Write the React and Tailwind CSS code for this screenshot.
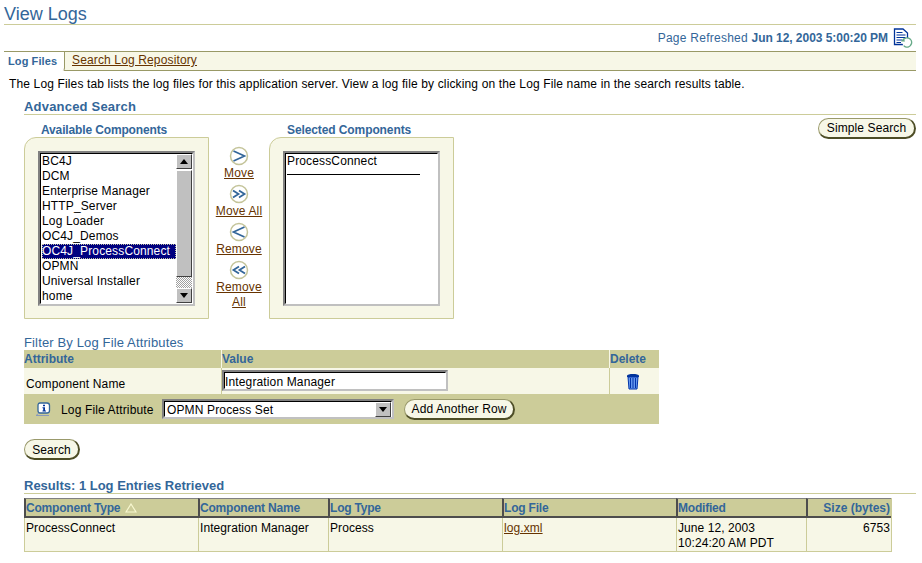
const list = ["BC4J", "DCM", "Enterprise Manager", "HTTP_Server", "Log Loader", "OC4J_Demos", "OC4J_ProcessConnect", "OPMN", "Universal Installer", "home"];

function Circle({ kind }) {
  return (
    <svg width="20" height="20" viewBox="0 0 20 20" className="block shrink-0">
      <circle cx="10" cy="10" r="8.5" fill="#ffffff" stroke="#c4c49a" strokeWidth="1.5" />
      {kind === "right" && <path d="M4.5 5 L15.5 10 L4.5 15" fill="none" stroke="#336699" strokeWidth="1.7" />}
      {kind === "left" && <path d="M15.5 5 L4.5 10 L15.5 15" fill="none" stroke="#336699" strokeWidth="1.7" />}
      {kind === "rightAll" && <path d="M4 6.5 L9.5 10 L4 13.5 M10 6.5 L15.5 10 L10 13.5" fill="none" stroke="#336699" strokeWidth="1.8" />}
      {kind === "leftAll" && <path d="M10 6.5 L4.5 10 L10 13.5 M16 6.5 L10.5 10 L16 13.5" fill="none" stroke="#336699" strokeWidth="1.8" />}
    </svg>
  );
}

function Shuttle({ kind, children }) {
  return (
    <div className="flex flex-col items-center h-[38px]">
      <Circle kind={kind} />
      <a className="underline text-[#663300] text-[12px] leading-[15px] text-center">{children}</a>
    </div>
  );
}

function OraButton({ children, className }) {
  return (
    <button className={"h-[21px] rounded-full border border-[#99996b] border-r-2 border-b-2 border-r-[#4d4d26] border-b-[#4d4d26] bg-[#f7f7e7] text-[12px] leading-none text-black tracking-[0.1px] " + className}>
      {children}
    </button>
  );
}

function Arrow({ up }) {
  return (
    <div className="h-[15px] w-[16px] shrink-0 bg-[#c0c0c0] border border-t-white border-l-white border-r-[#404040] border-b-[#404040] flex items-center justify-center">
      <svg width="8" height="5" viewBox="0 0 8 5">
        <path d={up ? "M0 5 L4 0 L8 5 Z" : "M0 0 L4 5 L8 0 Z"} fill="#000000" />
      </svg>
    </div>
  );
}

function Sunken({ className, children }) {
  return (
    <div className={"border-2 border-t-[#808080] border-l-[#808080] border-r-[#c0c0c0] border-b-[#c0c0c0] " + className}>
      <div className="h-full w-full border border-t-black border-l-black border-r-white border-b-white bg-white">
        {children}
      </div>
    </div>
  );
}

function HeaderCell({ className, children }) {
  return (
    <div className={"h-[20px] bg-[#cccc99] border-t border-t-[#808080] border-l-2 border-l-[#4d4d4d] border-b-2 border-b-[#4d4d4d] pt-[1px] text-[12px] leading-[16px] font-bold tracking-[-0.2px] text-[#336699] flex items-center gap-[5px] " + className}>
      {children}
    </div>
  );
}

function BodyCell({ className, children }) {
  return (
    <div className={"bg-[#f7f7e7] border-l border-l-[#cccc99] pl-[1px] pt-[3px] text-[12px] leading-[15px] tracking-[0.08px] text-black " + className}>
      {children}
    </div>
  );
}

export default function App() {
  return (
    <div className="w-[922px] h-[563px] overflow-hidden bg-white pl-[4px] pr-[6px] font-['Liberation_Sans',Arial,sans-serif] text-[12px] tracking-[0.14px] text-black">
      <h1 className="h-[25px] border-b border-[#cccc99] text-[18px] leading-[29px] tracking-normal text-[#336699] font-normal">View Logs</h1>

      <div className="h-[26px] flex items-center justify-end gap-[5px] pr-[3px] text-[12px] text-[#336699]">
        <span className="tracking-[0.25px]">Page Refreshed <b className="tracking-[-0.04px]">Jun 12, 2003 5:00:20 PM</b></span>
        <svg width="20" height="20" viewBox="0 0 20 20" className="block">
          <path d="M1.5 1 H10 L14.5 5 V16.5 H1.5 Z" fill="#ffffff" stroke="#003399" strokeWidth="1.3" />
          <path d="M3.5 4.5 H9.5 M3.5 7 H12.5 M3.5 9.5 H12.5 M3.5 12 H9 M3.5 14.5 H8" stroke="#003399" strokeWidth="1" />
          <circle cx="14" cy="14.5" r="4.6" fill="#ffffff" stroke="#66aa88" strokeWidth="1.4" strokeDasharray="23 6" transform="rotate(200 14 14.5)" />
          <path d="M8 13.5 L12 13.5 L10.5 10 Z" fill="#66aa88" />
        </svg>
      </div>

      <div className="h-[20px] flex border-t border-b border-[#999966] bg-[#f7f7e7]">
        <div className="w-[61px] -mb-px bg-white border-r border-b border-r-[#999966] border-b-white rounded-br-[3px] pl-[4px] pt-[1px] text-[11px] leading-[17px] tracking-[0.1px] font-bold text-[#336699]">Log Files</div>
        <a className="pl-[7px] text-[12px] leading-[16px] text-[#663300] underline">Search Log Repository</a>
      </div>

      <p className="pl-[5px] mt-[6px] leading-[15px] text-[12px]">The Log Files tab lists the log files for this application server. View a log file by clicking on the Log File name in the search results table.</p>

      <div className="ml-[20px]">
        <h2 className="mt-[6px] h-[17px] border-b border-[#cccc99] text-[13px] leading-[18px] tracking-[0.2px] font-bold text-[#336699]">Advanced Search</h2>

        <div className="flex items-start justify-between">
          <div className="flex">
            <div className="w-[185px]">
              <div className="pl-[17px] h-[22px] pt-[8px] text-[12px] leading-[14px] tracking-[-0.14px] font-bold text-[#336699]">Available Components</div>
              <div className="h-[182px] bg-[#f7f7e7] border border-[#cccc99] rounded-tl-[12px] pl-[13px] pt-[13px]">
                <Sunken className="w-[157px] h-[155px]">
                  <div className="flex h-full">
                    <ul className="w-[137px] pl-[1px]">
                      {list.map((name) => (
                        <li key={name} className={name === "OC4J_ProcessConnect" ? "h-[15px] leading-[15px] bg-[#000080] text-white outline-1 -outline-offset-1 outline-dotted outline-[#c0c0a0]" : "h-[15px] leading-[15px]"}>{name}</li>
                      ))}
                    </ul>
                    <div className="w-[16px] flex flex-col">
                      <Arrow up />
                      <div className="h-[108px] mt-[1px] bg-[#c0c0c0] border border-t-white border-l-white border-r-[#404040] border-b-[#404040]" />
                      <div className="h-[11px] bg-[conic-gradient(#a0a0a0_25%,#ffffff_0_50%,#a0a0a0_0_75%,#ffffff_0)] bg-[length:2px_2px]" />
                      <Arrow />
                    </div>
                  </div>
                </Sunken>
              </div>
            </div>

            <div className="w-[60px] pt-[31px] flex flex-col items-center">
              <Shuttle kind="right">Move</Shuttle>
              <Shuttle kind="rightAll">Move All</Shuttle>
              <Shuttle kind="left">Remove</Shuttle>
              <Shuttle kind="leftAll">Remove<br />All</Shuttle>
            </div>

            <div className="w-[185px]">
              <div className="pl-[18px] h-[22px] pt-[8px] text-[12px] leading-[14px] tracking-[-0.1px] font-bold text-[#336699]">Selected Components</div>
              <div className="h-[182px] bg-[#f7f7e7] border border-[#cccc99] rounded-tl-[12px] pl-[13px] pt-[13px]">
                <Sunken className="w-[157px] h-[155px]">
                  <div className="pl-[1px] leading-[15px]">ProcessConnect</div>
                  <div className="ml-[1px] mt-[5px] w-[133px] border-t border-black" />
                </Sunken>
              </div>
            </div>
          </div>
          <OraButton className="w-[98px] mt-[3px]">Simple Search</OraButton>
        </div>

        <div className="mt-[15px] h-[16px] text-[13px] leading-[18px] text-[#336699]">Filter By Log File Attributes</div>

        <div className="w-[635px]">
          <div className="flex h-[18px] bg-[#cccc99] text-[12px] leading-[18px] tracking-normal font-bold text-[#336699]">
            <div className="w-[197px]">Attribute</div>
            <div className="w-[388px] border-l border-[#f7f7e7]">Value</div>
            <div className="flex-1 border-l border-[#f7f7e7]">Delete</div>
          </div>
          <div className="flex h-[26px] bg-[#f7f7e7]">
            <div className="w-[197px] pl-[2px] pt-[9px] leading-[15px]">Component Name</div>
            <div className="w-[388px] border-l border-[#cccc99] pt-[2px]">
              <Sunken className="w-[226px] h-[21px]">
                <div className="leading-[19px]">Integration Manager</div>
              </Sunken>
            </div>
            <div className="flex-1 border-l border-[#cccc99] flex items-center justify-center pr-[3px]">
              <svg width="14" height="17" viewBox="0 0 14 17">
                <path d="M1 3 C1 1.5 4 1 7 1 C10 1 13 1.5 13 3 V4 H1 Z" fill="#003399" />
                <path d="M2 4 H12 L11 16 H3 Z" fill="#6699ee" stroke="#0033aa" />
                <path d="M4.5 5 V15 M7 5 V15 M9.5 5 V15" stroke="#0033aa" strokeWidth="1" />
              </svg>
            </div>
          </div>
          <div className="flex items-center h-[30px] bg-[#cccc99]">
            <svg width="16" height="15" viewBox="0 0 16 15" className="ml-[11px] block">
              <path d="M5 1 H12 Q14.5 1 14.5 3.5 V8.5 Q14.5 11 12 11 H5 Q3 11 3 8.5 V3.5 Q3 1 5 1 Z" fill="#ffffff" stroke="#336699" strokeWidth="1.3" />
              <path d="M4 11 L1 13.5 H14" fill="none" stroke="#8899bb" />
              <path d="M8 2.8 H10 V4.3 H8 Z M7.5 5.3 H10 V8.6 H11 V9.6 H7.5 V8.6 H8.2 V6.3 H7.5 Z" fill="#003399" />
            </svg>
            <span className="ml-[10px] w-[101px] leading-[15px] pt-[2px]">Log File Attribute</span>
            <Sunken className="w-[232px] h-[20px]">
              <div className="flex justify-between h-full">
                <span className="pl-[2px] leading-[17px]">OPMN Process Set</span>
                <Arrow />
              </div>
            </Sunken>
            <OraButton className="w-[111px] ml-[10px] pt-[1px]">Add Another Row</OraButton>
          </div>
        </div>

        <OraButton className="w-[56px] mt-[15px] block pt-[1px]">Search</OraButton>

        <h2 className="mt-[17px] h-[17px] border-b border-[#cccc99] text-[13px] leading-[17px] tracking-normal font-bold text-[#336699]">Results: 1 Log Entries Retrieved</h2>

        <div className="mt-[4px] w-[868px] border-b border-r border-[#cccc99]">
          <div className="flex">
            <HeaderCell className="w-[174px]">
              Component Type
              <svg width="12" height="10" viewBox="0 0 12 10"><path d="M6 1 L11 9 H1 Z" fill="none" stroke="#f7f7d0" strokeWidth="1.2" /></svg>
            </HeaderCell>
            <HeaderCell className="w-[130px]">Component Name</HeaderCell>
            <HeaderCell className="w-[174px]">Log Type</HeaderCell>
            <HeaderCell className="w-[174px]">Log File</HeaderCell>
            <HeaderCell className="w-[130px]">Modified</HeaderCell>
            <HeaderCell className="flex-1 justify-end pr-[1px] tracking-normal">Size (bytes)</HeaderCell>
          </div>
          <div className="flex h-[33px]">
            <BodyCell className="w-[174px]">ProcessConnect</BodyCell>
            <BodyCell className="w-[130px]">Integration Manager</BodyCell>
            <BodyCell className="w-[174px]">Process</BodyCell>
            <BodyCell className="w-[174px]"><a className="underline text-[#663300]">log.xml</a></BodyCell>
            <BodyCell className="w-[130px]">June 12, 2003<br />10:24:20 AM PDT</BodyCell>
            <BodyCell className="flex-1 text-right pr-[1px]">6753</BodyCell>
          </div>
        </div>
      </div>
    </div>
  );
}
